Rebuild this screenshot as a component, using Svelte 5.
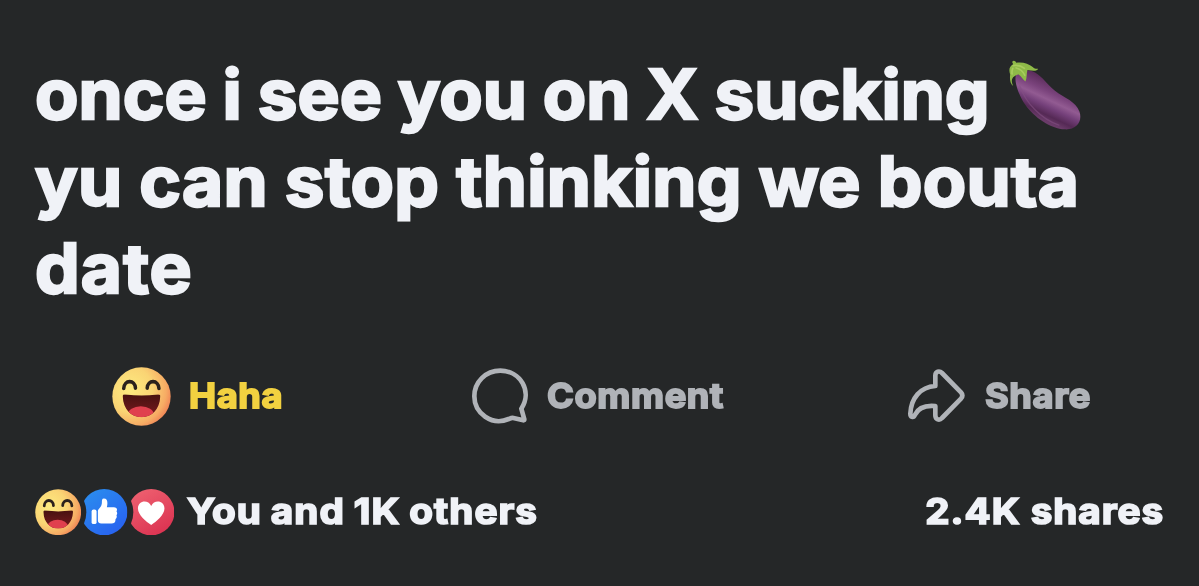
<script>
	const lines = [
		{ text: 'once i see you on X sucking', key: 'first', eggplant: true },
		{ text: 'yu can stop thinking we bouta', key: 'second' },
		{ text: 'date', key: 'third' }
	];
</script>

{#snippet haha()}
	<svg class="face" viewBox="0 0 176 176" aria-hidden="true">
		<defs>
			<radialGradient id="skin" cx="0.3" cy="0.38" r="0.78">
				<stop offset="0" stop-color="#fdeb80" />
				<stop offset="0.5" stop-color="#fad474" />
				<stop offset="0.8" stop-color="#f6ab64" />
				<stop offset="1" stop-color="#ee7650" />
			</radialGradient>
			<linearGradient id="mouth" x1="0" y1="0" x2="0" y2="1">
				<stop offset="0" stop-color="#44110f" />
				<stop offset="1" stop-color="#7b1a20" />
			</linearGradient>
			<clipPath id="mouth-shape">
				<path d="M32 89c-1-7 3-8 9-7q47 6 95 0c6-1 9 1 8 7-2 37-25 61-56 61s-54-24-56-61z" />
			</clipPath>
		</defs>
		<circle cx="88" cy="88" r="87" fill="url(#skin)" />
		<g clip-path="url(#mouth-shape)">
			<path d="M28 76h120v78H28z" fill="url(#mouth)" />
			<ellipse cx="86" cy="143" rx="39" ry="26" fill="#e0404e" />
		</g>
		<path
			d="M35 64c1-27 34-27 35-1M105 63c1-26 34-26 35 1"
			fill="none"
			stroke="#2b211c"
			stroke-width="10.5"
			stroke-linecap="round"
		/>
	</svg>
{/snippet}

<main class="post">
	<h1 class="message">
		{#each lines as line}
			<span class="line"
				><span class="words {line.key}">{line.text}</span>{#if line.eggplant}<svg
						class="eggplant"
						viewBox="55 30 222 214"
						role="img"
						aria-label="eggplant"
					>
						<defs>
							<linearGradient id="flesh" x1="0.65" y1="0.22" x2="0.35" y2="0.8">
								<stop offset="0" stop-color="#5b2c5b" />
								<stop offset="0.3" stop-color="#7b447d" />
								<stop offset="0.48" stop-color="#925b92" />
								<stop offset="0.65" stop-color="#74407a" />
								<stop offset="0.85" stop-color="#552955" />
								<stop offset="1" stop-color="#6a3b69" />
							</linearGradient>
						</defs>
						<path
							d="M80 72c12-12 36-16 56-4 22 12 36 36 60 55 30 23 62 31 74 63 10 31-11 55-44 53-43-2-93-36-120-75-20-29-36-74-26-92z"
							fill="url(#flesh)"
						/>
						<path
							d="M90 108c17 50 64 101 118 118"
							fill="none"
							stroke="#845083"
							stroke-width="4"
							stroke-linecap="round"
							opacity="0.6"
						/>
						<path
							d="M67 36c3-6 10-4 12 2 20-3 38 3 50 13 7 6 11 6 16 5-2 8-16 7-32 4-3 10-1 24-6 35-8-7-13-17-22-22-8 5-15 7-18 14-3 8 1 15 3 21-11-8-10-24-9-34-4-13-4-24 9-31z"
							fill="#8fba48"
						/>
						<path
							d="M70 47q20-3 34 8M69 55q-4 9-2 17M79 54q18 4 26 22"
							fill="none"
							stroke="#a9cc5e"
							stroke-width="5"
							stroke-linecap="round"
						/>
					</svg>{/if}</span
			>
		{/each}
	</h1>

	<div class="actions">
		<button class="action liked">
			<span class="action-face">{@render haha()}</span>
			<span class="label">Haha</span>
		</button>
		<button class="action comment">
			<svg class="comment-icon" viewBox="39 38 171 168" aria-hidden="true">
				<path
					d="M187 160C221 108 184 46 124 46 80 46 46 80 46 123c0 51 53 90 103 68 5-2 9-4 14-3l30 7c2 0 3-1 3-3l-9-32z"
				/>
			</svg>
			<span class="label">Comment</span>
		</button>
		<button class="action share">
			<svg class="share-icon" viewBox="48 42 171 162" aria-hidden="true">
				<path
					d="M130 93V62c0-13 12-16 20-8l57 58q8 9 0 19l-57 58c-8 9-20 5-20-8v-28c-31-3-51 5-61 26-5 11-14 7-14-3 2-47 30-80 75-83z"
				/>
			</svg>
			<span class="label">Share</span>
		</button>
	</div>

	<div class="summary">
		<div class="reactions">
			<span class="badge">{@render haha()}</span>
			<svg class="badge" viewBox="0 0 140 140" aria-hidden="true">
				<defs>
					<linearGradient id="blue" x1="0" y1="0" x2="0.8" y2="1">
						<stop offset="0" stop-color="#2b91ee" />
						<stop offset="1" stop-color="#2861f0" />
					</linearGradient>
					<mask id="bite">
						<path d="M0 0h140v140H0z" fill="#fff" />
						<circle cx="-68" cy="70" r="84" fill="#000" />
					</mask>
				</defs>
				<circle cx="70" cy="70" r="70" fill="url(#blue)" mask="url(#bite)" />
				<rect x="32" y="62" width="15" height="44" rx="6" fill="#fff" />
				<path
					d="M51 67c0-8 11-11 12-25 0-8 0-13 6-13 12 0 12 14 9 26h21c9 0 12 7 8 12 3 4 3 8 0 12 2 5 1 9-3 12 1 9-4 13-12 13H61c-6 0-10-3-10-8z"
					fill="#fff"
				/>
			</svg>
			<svg class="badge" viewBox="0 0 140 140" aria-hidden="true">
				<defs>
					<linearGradient id="red" x1="0" y1="0" x2="0.6" y2="1">
						<stop offset="0" stop-color="#f06573" />
						<stop offset="1" stop-color="#dc3553" />
					</linearGradient>
				</defs>
				<circle cx="70" cy="70" r="70" fill="url(#red)" mask="url(#bite)" />
				<path
					d="M70 109C55 98 30 79 30 59c0-25 31-28 40-8 9-20 40-17 40 8 0 20-25 39-40 50z"
					fill="#fff"
				/>
			</svg>
			<span class="count">You and 1K others</span>
		</div>
		<span class="shares">2.4K shares</span>
	</div>
</main>

<style>
	:global(body) {
		margin: 0;
		background: #252728;
	}
	.post {
		box-sizing: border-box;
		width: 1199px;
		height: 586px;
		padding: 52px 35px 0;
		background: #252728;
		color: #f0f2f7;
		font-family: Inter, 'Liberation Sans', sans-serif;
		overflow: hidden;
	}
	.message {
		margin: 0;
		font-size: 68.5px;
		font-weight: 700;
		line-height: 86px;
		-webkit-text-stroke: 2.4px currentColor;
	}
	.line {
		display: flex;
		height: 87px;
		white-space: nowrap;
	}
	.words {
		transform: scaleX(1.035);
		transform-origin: left;
	}
	.first {
		letter-spacing: 0.05px;
		word-spacing: -1px;
	}
	.second {
		letter-spacing: 0.35px;
		word-spacing: -0.4px;
	}
	.third {
		letter-spacing: 1.1px;
	}
	.eggplant {
		width: 74px;
		height: 71px;
		margin: 8px 0 0 51px;
	}
	.actions {
		display: flex;
		justify-content: space-between;
		height: 60px;
		margin: 53px 74px 0 77px;
	}
	.action {
		display: flex;
		align-items: center;
		padding: 0;
		border: 0;
		background: none;
		color: #b0b3b8;
		font: inherit;
	}
	.liked {
		color: #f2d140;
	}
	.comment {
		margin-left: 7px;
	}
	.label {
		font-size: 34px;
		font-weight: 700;
		line-height: 60px;
		letter-spacing: 0.6px;
		white-space: nowrap;
		transform: scaleX(1.065);
		transform-origin: left;
		-webkit-text-stroke: 1.8px currentColor;
	}
	.liked .label {
		margin-right: 5px;
	}
	.comment .label {
		margin-right: 11px;
	}
	.share .label {
		margin-right: 6px;
	}
	.action-face {
		width: 59px;
		height: 59px;
		margin-right: 18px;
	}
	.face {
		display: block;
		width: 100%;
		height: 100%;
	}
	.comment-icon {
		width: 57px;
		height: 56px;
		margin-right: 18px;
	}
	.share-icon {
		width: 57px;
		height: 54px;
		margin-right: 20px;
	}
	.comment-icon path,
	.share-icon path {
		fill: none;
		stroke: currentColor;
		stroke-width: 14;
		stroke-linejoin: round;
	}
	.summary {
		display: flex;
		justify-content: space-between;
		height: 48px;
		margin-top: 62px;
		font-size: 35.5px;
		font-weight: 700;
		line-height: 48px;
		letter-spacing: 0.9px;
		white-space: nowrap;
		-webkit-text-stroke: 1.7px currentColor;
	}
	.reactions {
		display: flex;
		align-items: center;
	}
	.badge {
		width: 46.4px;
		height: 46.4px;
	}
	.count {
		margin-left: 13px;
		word-spacing: -1px;
		transform: scaleX(1.09);
		transform-origin: left;
	}
	.shares {
		transform: scaleX(1.09);
		transform-origin: right;
	}
</style>
